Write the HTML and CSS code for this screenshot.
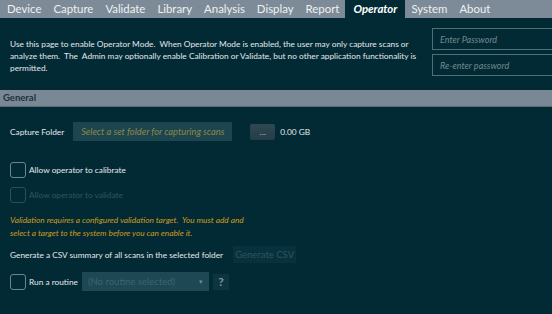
FILE: index.html
```html
<!DOCTYPE html>
<html lang="en">
<head>
    <meta charset="UTF-8">
    <meta name="viewport" content="width=device-width, initial-scale=1.0">
    <title>Operator</title>
    <link rel="stylesheet" href="styles.css">
</head>
<body>
    <div class="tabs">
        <div class="tab">Device</div>
        <div class="tab">Capture</div>
        <div class="tab">Validate</div>
        <div class="tab">Library</div>
        <div class="tab">Analysis</div>
        <div class="tab">Display</div>
        <div class="tab">Report</div>
        <div class="tab active">Operator</div>
        <div class="tab">System</div>
        <div class="tab">About</div>
    </div>

    <div class="intro">
        <p class="intro-text">Use this page to enable Operator Mode.&nbsp; When Operator Mode is enabled, the user may only capture scans or analyze them.&nbsp; The&nbsp; Admin may optionally enable Calibration or Validate, but no other application functionality is permitted.</p>
        <div class="passwords">
            <input type="password" placeholder="Enter Password">
            <input type="password" placeholder="Re-enter password">
        </div>
    </div>

    <div class="section-header">General</div>

    <div class="content">
        <div class="row folder-row">
            <span class="label">Capture Folder</span>
            <div class="folder-box">Select a set folder for capturing scans</div>
            <button class="browse">...</button>
            <span class="size">0.00 GB</span>
        </div>

        <label class="check">
            <span class="box"></span>
            Allow operator to calibrate
        </label>
        <label class="check disabled">
            <span class="box"></span>
            Allow operator to validate
        </label>

        <p class="warning">Validation requires a configured validation target.&nbsp; You must add and select a target to the system before you can enable it.</p>

        <div class="row csv-row">
            <span class="label">Generate a CSV summary of all scans in the selected folder</span>
            <button class="csv" disabled>Generate CSV</button>
        </div>

        <div class="row routine-row">
            <label class="check">
                <span class="box"></span>
                Run a routine
            </label>
            <div class="routine-select">
                <span>(No routine selected)</span>
                <span class="arrow">&#9662;</span>
            </div>
            <span class="help">?</span>
        </div>
    </div>
</body>
</html>
```

FILE: styles.css
```css
body {
    margin: 0;
    width: 552px;
    height: 314px;
    overflow: hidden;
    background-color: #022a35;
    color: #e2e8ea;
    font-family: Lato, "Open Sans", sans-serif;
    font-size: 8.3px;
}
.tabs {
    display: flex;
    height: 18px;
    background-color: #7d8a97;
    padding-left: 1px;
}
.tab {
    padding: 0 6px;
    line-height: 18px;
    font-size: 11.4px;
    color: #eef1f3;
}
.tab.active {
    background-color: #022a35;
    color: #ffffff;
    font-weight: bold;
    font-style: italic;
    padding: 0 8px;
}
.intro {
    display: flex;
    padding: 10px 0 0 10px;
    height: 62px;
}
.intro-text {
    flex: none;
    margin: 10px 0 0 0;
    width: 416px;
    line-height: 12px;
}
.passwords {
    flex: none;
    display: flex;
    flex-direction: column;
    gap: 4px;
    margin-left: 6px;
}
.passwords input {
    width: 130px;
    height: 22px;
    box-sizing: border-box;
    background: transparent;
    border: 1px solid #4f6f76;
    padding: 0 7px;
    font-family: inherit;
    font-size: 9px;
    font-style: italic;
    color: #e2e8ea;
}
.passwords input::placeholder {
    color: #73898f;
}
.section-header {
    height: 16px;
    line-height: 16px;
    background-color: #7a8794;
    color: #1b3440;
    font-weight: bold;
    font-size: 9.5px;
    padding-left: 3px;
    border-bottom: 1px solid #5a6a77;
}
.content {
    padding: 15px 10px 0 10px;
}
.row {
    display: flex;
    align-items: center;
}
.folder-box {
    margin-left: 9px;
    width: 159px;
    height: 19px;
    line-height: 19px;
    background-color: #1c4550;
    color: #8d8a45;
    font-style: italic;
    font-size: 9.3px;
    text-align: center;
}
.browse {
    margin-left: 18px;
    width: 25px;
    height: 16px;
    border: none;
    border-radius: 2px;
    background: linear-gradient(#2f4852, #243e48);
    color: #dbe3e6;
    font-size: 8px;
    padding: 0;
    line-height: 18px;
}
.size {
    margin-left: 5px;
}
.check {
    display: flex;
    align-items: center;
    gap: 3px;
    margin-top: 21px;
    height: 16px;
}
.check + .check {
    margin-top: 9px;
}
.box {
    width: 14px;
    height: 14px;
    border: 1px solid #6b858b;
    border-radius: 3px;
}
.check.disabled {
    color: #2f5560;
}
.check.disabled .box {
    border-color: #2b4f59;
}
.warning {
    margin: 11px 0 0 0;
    color: #d09a1c;
    font-style: italic;
    width: 250px;
    line-height: 12.5px;
}
.csv-row {
    margin-top: 7px;
}
.csv {
    margin-left: 10px;
    height: 17px;
    width: 63px;
    border: none;
    background-color: #07323d;
    color: #2c5460;
    font-family: inherit;
    font-size: 9.5px;
    padding: 0;
}
.routine-row {
    margin-top: 9px;
}
.routine-row .check {
    margin-top: 0;
}
.routine-select {
    margin-left: 4px;
    width: 127px;
    height: 19px;
    box-sizing: border-box;
    background-color: #1e4853;
    color: #3d6570;
    display: flex;
    align-items: center;
    justify-content: space-between;
    padding: 0 6px 0 6px;
    font-size: 9.5px;
}
.arrow {
    font-size: 7px;
    color: #6d8a91;
}
.help {
    margin-left: 4px;
    width: 16px;
    height: 16px;
    line-height: 16px;
    text-align: center;
    background-color: #0c3540;
    color: #7f959b;
    font-weight: bold;
    font-size: 12px;
}
```
